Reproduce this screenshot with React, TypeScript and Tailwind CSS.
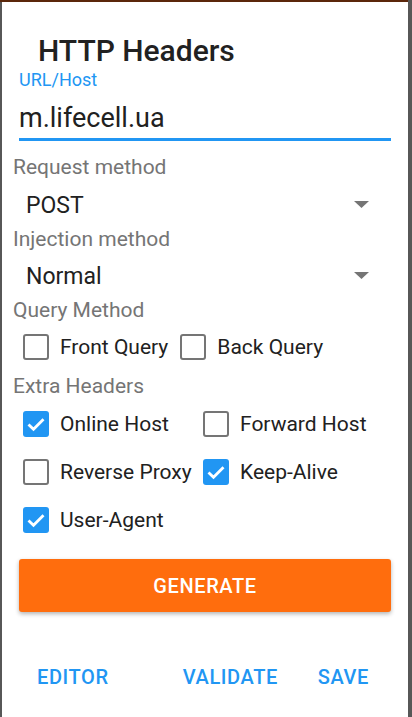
const font = { fontFamily: 'Roboto, "Noto Sans", sans-serif' };

const Arrow = ({ className = '' }: { className?: string }) => (
  <svg width="15" height="7" viewBox="0 0 15 7" className={className}>
    <path d="M0 0 H15 L7.5 7 Z" fill="#757575" />
  </svg>
);

interface CheckProps {
  label: string;
  checked?: boolean;
}

const Check = ({ label, checked = false }: CheckProps) => (
  <div className="flex h-[26px] items-center">
    {checked ? (
      <div className="flex h-[26px] w-[26px] items-center justify-center rounded-[3px] bg-[#2196f3]">
        <svg width="24" height="24" viewBox="0 0 24 24">
          <path d="M4.5 12.5 L9.5 17.3 L19.5 7.2" fill="none" stroke="white" strokeWidth="2.8" />
        </svg>
      </div>
    ) : (
      <div className="h-[26px] w-[26px] rounded-[3px] border-[2.5px] border-[#757575]" />
    )}
    <span className="ml-[11px] text-[21px] leading-[21px] text-[#212121]">{label}</span>
  </div>
);

const Spinner = ({ value }: { value: string }) => (
  <div className="flex items-start justify-between pl-[24px] pr-[39px]">
    <span className="text-[23px] leading-[23px] text-[#212121]">{value}</span>
    <Arrow className="mt-[7px]" />
  </div>
);

export default function App() {
  return (
    <div className="flex h-[717px] w-[412px] flex-col overflow-hidden bg-[#575757]" style={font}>
      <div className="h-[2px] w-[408px] shrink-0 bg-[#5b260a]" />
      <div className="ml-[2px] flex w-[406px] grow flex-col bg-white pt-[34px]">
        {/* titulo */}
        <h1 className="pl-[36px] text-[30px] font-medium leading-[30px] text-[#212121]">HTTP Headers</h1>

        {/* url */}
        <div className="mt-[5px] pl-[17px] text-[18px] leading-[18px] text-[#2196f3]">URL/Host</div>
        <div className="mt-[16px] pl-[17px] text-[27px] leading-[27px] text-[#212121]">m.lifecell.ua</div>
        <div className="mx-[17px] mt-[6px] h-[3px] bg-[#2196f3]" />

        <div className="mt-[16px] pl-[11px] text-[21px] leading-[21px] text-[#757575]">Request method</div>
        <div className="mt-[16px]">
          <Spinner value="POST" />
        </div>

        <div className="mt-[12px] pl-[11px] text-[21px] leading-[21px] text-[#757575]">Injection method</div>
        <div className="mt-[15px]">
          <Spinner value="Normal" />
        </div>

        <div className="mt-[12px] pl-[11px] text-[21px] leading-[21px] text-[#757575]">Query Method</div>
        <div className="mt-[13px] flex gap-[12px] pl-[21px]">
          <Check label="Front Query" />
          <Check label="Back Query" />
        </div>

        <div className="mt-[16px] pl-[11px] text-[21px] leading-[21px] text-[#757575]">Extra Headers</div>
        <div className="mt-[14px] grid grid-cols-[180px_auto] gap-y-[22px] pl-[21px]">
          <Check label="Online Host" checked />
          <Check label="Forward Host" />
          <Check label="Reverse Proxy" />
          <Check label="Keep-Alive" checked />
          <Check label="User-Agent" checked />
        </div>

        <button className="mx-[17px] mt-[26px] flex h-[53px] items-center justify-center rounded-[3px] bg-[#ff6d0d] text-[20px] font-medium tracking-[0.03em] text-white shadow-[0_2px_4px_rgba(0,0,0,0.3)]">
          GENERATE
        </button>

        <div className="mt-[55px] flex items-start pl-[35px] pr-[39px] text-[20px] font-medium leading-[20px] tracking-[0.03em] text-[#2196f3]">
          <span>EDITOR</span>
          <span className="ml-auto">VALIDATE</span>
          <span className="ml-[40px]">SAVE</span>
        </div>
      </div>
    </div>
  );
}
